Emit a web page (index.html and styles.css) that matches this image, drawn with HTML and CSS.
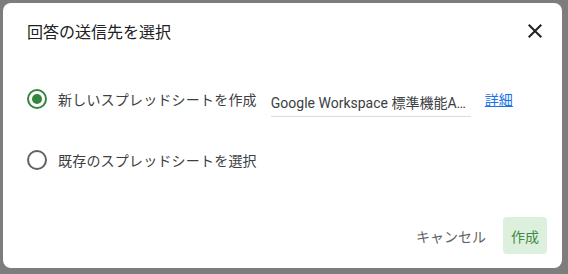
FILE: index.html
```html
<!DOCTYPE html>
<html lang="ja">
<head>
  <meta charset="UTF-8">
  <title>回答の送信先を選択</title>
  <link rel="stylesheet" href="styles.css">
</head>
<body>

  <div class="dialog">
    <div class="dialog-header">
      <h2 class="dialog-title">回答の送信先を選択</h2>
      <button class="close-btn" aria-label="閉じる">
        <svg width="24" height="24" viewBox="0 0 24 24">
          <path d="M19 6.41L17.59 5 12 10.59 6.41 5 5 6.41 10.59 12 5 17.59 6.41 19 12 13.41 17.59 19 19 17.59 13.41 12z" fill="#202124"/>
        </svg>
      </button>
    </div>

    <div class="options">
      <div class="option">
        <span class="radio checked"></span>
        <span class="option-label">新しいスプレッドシートを作成</span>
        <div class="name-field"><span class="name-text">Google Workspace 標準機能A…</span></div>
        <a class="more-link" href="#">詳細</a>
      </div>
      <div class="option">
        <span class="radio"></span>
        <span class="option-label">既存のスプレッドシートを選択</span>
      </div>
    </div>

    <div class="dialog-actions">
      <button class="btn btn-text">キャンセル</button>
      <button class="btn btn-create">作成</button>
    </div>
  </div>

</body>
</html>
```

FILE: styles.css
```css
body {
  margin: 0;
  padding: 3px;
  background: #7d7d7d;
  font-family: Roboto, "Noto Sans CJK JP", sans-serif;
  color: #3c4043;
}

.dialog {
  width: 559px;
  height: 265px;
  background: #fff;
  border-radius: 8px;
  box-sizing: border-box;
  padding: 18px 15px 14px 24px;
  display: flex;
  flex-direction: column;
}

.dialog-header {
  display: flex;
  align-items: center;
  justify-content: space-between;
  height: 24px;
}

.dialog-title {
  margin: 0;
  font-size: 16px;
  font-weight: 400;
  line-height: 24px;
  color: #202124;
}

.close-btn {
  border: none;
  background: none;
  padding: 0;
  margin-top: -4px;
  width: 24px;
  height: 24px;
  cursor: pointer;
}

.options {
  display: flex;
  flex-direction: column;
  gap: 37px;
  margin-top: 42px;
}

.option {
  display: flex;
  align-items: center;
  height: 24px;
  font-size: 14px;
}

.radio {
  flex: none;
  width: 20px;
  height: 20px;
  box-sizing: border-box;
  border: 2px solid #5f6368;
  border-radius: 50%;
  display: flex;
  align-items: center;
  justify-content: center;
}

.radio.checked {
  border-color: #34853e;
}

.radio.checked::after {
  content: "";
  width: 10px;
  height: 10px;
  border-radius: 50%;
  background: #34853e;
}

.option-label {
  margin-left: 11px;
  letter-spacing: 0.2px;
  color: #3c4043;
}

.name-field {
  width: 200px;
  margin-left: 14px;
  margin-top: 10px;
  padding: 3px 0 4px;
  border-bottom: 1px solid #dadce0;
  line-height: 17px;
}

.name-text {
  display: block;
  white-space: nowrap;
  overflow: hidden;
  color: #3c4043;
}

.more-link {
  margin-left: 14px;
  color: #1a73e8;
  text-decoration: underline;
}

.dialog-actions {
  margin-top: auto;
  display: flex;
  justify-content: flex-end;
  gap: 9px;
}

.btn {
  border: none;
  border-radius: 4px;
  height: 37px;
  padding: 0 8px;
  font-family: inherit;
  font-size: 14px;
  background: none;
  cursor: pointer;
}

.btn-text {
  color: #5f6368;
}

.btn-create {
  background: #ddefdd;
  color: #3d8b46;
}
```
